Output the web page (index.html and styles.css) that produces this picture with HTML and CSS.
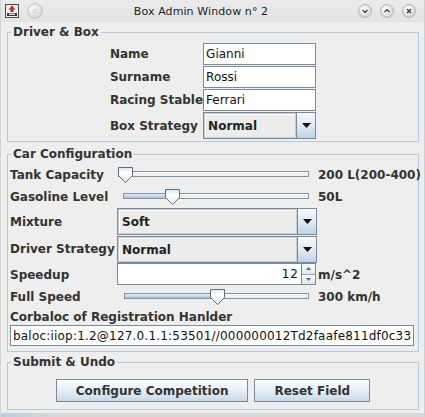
FILE: index.html
```html
<!DOCTYPE html>
<html lang="en">
<head>
<meta charset="utf-8">
<title>Box Admin Window n° 2</title>
<link rel="stylesheet" href="styles.css">
</head>
<body>
<div class="window">
  <header class="titlebar">
    <div class="tb-left">
      <svg class="app-icon" width="16" height="16" viewBox="0 0 16 16">
        <rect x="1.5" y="1.5" width="13" height="13" fill="#f2f2f2" stroke="#4a4a4a"/>
        <path d="M8 2.5 L11.5 6.5 L9.5 6.5 L9.5 9 L6.5 9 L6.5 6.5 L4.5 6.5 Z" fill="#c4262c"/>
        <rect x="3" y="10" width="10" height="3" fill="#3a3a3a"/>
        <rect x="5" y="10.5" width="6" height="1.5" fill="#d8d8d8"/>
      </svg>
      <svg class="tb-btn" width="16" height="16" viewBox="0 0 16 16">
        <defs><radialGradient id="gl" cx="0.4" cy="0.35" r="0.7"><stop offset="0" stop-color="#ffffff"/><stop offset="1" stop-color="#d2d2d2"/></radialGradient></defs>
        <circle cx="8" cy="8" r="7.3" fill="url(#gl)" stroke="#bcbcbc" stroke-width="0.9"/>
        <circle cx="8" cy="8" r="2" fill="#e4e4e4" stroke="#c4c4c4" stroke-width="0.6"/>
      </svg>
    </div>
    <div class="tb-title">Box Admin Window n° 2</div>
    <div class="tb-right">
      <svg class="tb-btn" width="14" height="14" viewBox="0 0 14 14">
        <defs><radialGradient id="g1" cx="0.4" cy="0.35" r="0.7"><stop offset="0" stop-color="#ffffff"/><stop offset="1" stop-color="#d4d4d4"/></radialGradient></defs>
        <circle cx="7" cy="7" r="6.4" fill="url(#g1)" stroke="#a9a9a9" stroke-width="0.9"/>
        <path d="M4.6 6 L7 8.4 L9.4 6" fill="none" stroke="#3a3a3a" stroke-width="1.3"/>
      </svg>
      <svg class="tb-btn" width="14" height="14" viewBox="0 0 14 14">
        <defs><radialGradient id="g2" cx="0.4" cy="0.35" r="0.7"><stop offset="0" stop-color="#ffffff"/><stop offset="1" stop-color="#d4d4d4"/></radialGradient></defs>
        <circle cx="7" cy="7" r="6.4" fill="url(#g2)" stroke="#a9a9a9" stroke-width="0.9"/>
        <path d="M4.6 8 L7 5.6 L9.4 8" fill="none" stroke="#3a3a3a" stroke-width="1.3"/>
      </svg>
      <svg class="tb-btn" width="14" height="14" viewBox="0 0 14 14">
        <defs><radialGradient id="g3" cx="0.4" cy="0.35" r="0.7"><stop offset="0" stop-color="#ffffff"/><stop offset="1" stop-color="#d4d4d4"/></radialGradient></defs>
        <circle cx="7" cy="7" r="6.4" fill="url(#g3)" stroke="#a9a9a9" stroke-width="0.9"/>
        <path d="M5 5 L9 9 M9 5 L5 9" fill="none" stroke="#3a3a3a" stroke-width="1.3"/>
      </svg>
    </div>
  </header>

  <main class="content">
    <fieldset class="group group-driver">
      <legend>Driver &amp; Box</legend>
      <div class="form-driver">
        <span class="lbl">Name</span>
        <div class="field">Gianni</div>
        <span class="lbl">Surname</span>
        <div class="field">Rossi</div>
        <span class="lbl">Racing Stable</span>
        <div class="field">Ferrari</div>
        <span class="lbl">Box Strategy</span>
        <div class="combo">
          <span class="combo-value">Normal</span>
          <span class="combo-arrow"><svg width="9" height="5" viewBox="0 0 9 5"><path d="M0 0 H9 L4.5 5 Z" fill="#111"/></svg></span>
        </div>
      </div>
    </fieldset>

    <fieldset class="group group-car">
      <legend>Car Configuration</legend>
      <div class="form-car">
        <span class="lbl">Tank Capacity</span>
        <div class="slider slider-tank">
          <div class="track"><div class="track-fill" style="width:0px"></div></div>
          <svg class="thumb" style="left:1px" width="15" height="16" viewBox="0 0 15 16">
            <defs><linearGradient id="t1" x1="0" y1="0" x2="0" y2="1"><stop offset="0" stop-color="#dbe6f1"/><stop offset="0.35" stop-color="#ffffff"/><stop offset="1" stop-color="#e6edf4"/></linearGradient></defs>
            <path d="M0.5 0.5 H14.5 V8.5 L7.5 15.5 L0.5 8.5 Z" fill="url(#t1)" stroke="#5f6b78"/>
          </svg>
        </div>
        <span class="val">200 L(200-400)</span>

        <span class="lbl">Gasoline Level</span>
        <div class="slider slider-gas">
          <div class="track"><div class="track-fill" style="width:48px"></div></div>
          <svg class="thumb" style="left:48px" width="15" height="16" viewBox="0 0 15 16">
            <defs><linearGradient id="t2" x1="0" y1="0" x2="0" y2="1"><stop offset="0" stop-color="#dbe6f1"/><stop offset="0.35" stop-color="#ffffff"/><stop offset="1" stop-color="#e6edf4"/></linearGradient></defs>
            <path d="M0.5 0.5 H14.5 V8.5 L7.5 15.5 L0.5 8.5 Z" fill="url(#t2)" stroke="#5f6b78"/>
          </svg>
        </div>
        <span class="val">50L</span>

        <span class="lbl">Mixture</span>
        <div class="combo">
          <span class="combo-value">Soft</span>
          <span class="combo-arrow"><svg width="9" height="5" viewBox="0 0 9 5"><path d="M0 0 H9 L4.5 5 Z" fill="#111"/></svg></span>
        </div>
        <span></span>

        <span class="lbl">Driver Strategy</span>
        <div class="combo combo-low">
          <span class="combo-value">Normal</span>
          <span class="combo-arrow"><svg width="9" height="5" viewBox="0 0 9 5"><path d="M0 0 H9 L4.5 5 Z" fill="#111"/></svg></span>
        </div>
        <span></span>

        <span class="lbl">Speedup</span>
        <div class="spinner">
          <span class="spin-text">12</span>
          <span class="spin-btns">
            <span class="spin-btn"><svg width="5" height="3" viewBox="0 0 5 3"><path d="M0 3 H5 L2.5 0 Z" fill="#666"/></svg></span>
            <span class="spin-btn"><svg width="5" height="3" viewBox="0 0 5 3"><path d="M0 0 H5 L2.5 3 Z" fill="#666"/></svg></span>
          </span>
        </div>
        <span class="val">m/s^2</span>

        <span class="lbl">Full Speed</span>
        <div class="slider slider-full">
          <div class="track"><div class="track-fill" style="width:92px"></div></div>
          <svg class="thumb" style="left:93px" width="15" height="16" viewBox="0 0 15 16">
            <defs><linearGradient id="t3" x1="0" y1="0" x2="0" y2="1"><stop offset="0" stop-color="#dbe6f1"/><stop offset="0.35" stop-color="#ffffff"/><stop offset="1" stop-color="#e6edf4"/></linearGradient></defs>
            <path d="M0.5 0.5 H14.5 V8.5 L7.5 15.5 L0.5 8.5 Z" fill="url(#t3)" stroke="#5f6b78"/>
          </svg>
        </div>
        <span class="val">300 km/h</span>

        <span class="lbl lbl-wide">Corbaloc of Registration Hanlder</span>
        <div class="field field-wide">baloc:iiop:1.2@127.0.1.1:53501//000000012Td2faafe811df0c33</div>
      </div>
    </fieldset>

    <fieldset class="group group-submit">
      <legend>Submit &amp; Undo</legend>
      <div class="actions">
        <button class="btn" type="button">Configure Competition</button>
        <button class="btn" type="button">Reset Field</button>
      </div>
    </fieldset>
  </main>
  <div class="frame-bottom"></div>
</div>
</body>
</html>
```

FILE: styles.css
```css
* { box-sizing: border-box; }

html, body {
  margin: 0;
  padding: 0;
}

body {
  width: 425px;
  height: 417px;
  overflow: hidden;
  font-family: "DejaVu Sans", "Liberation Sans", sans-serif;
  font-size: 12px;
  color: #333333;
  background: #eeeeee;
}

.window {
  width: 425px;
  height: 417px;
  display: flex;
  flex-direction: column;
  background: #eeeeee;
  border-left: 1px solid #d6d6d6;
  border-right: 1px solid #cfcfcf;
}

/* ---------- title bar ---------- */
.titlebar {
  height: 22px;
  flex: none;
  display: flex;
  align-items: center;
  background: linear-gradient(#ebebeb, #e3e3e3);
}

.tb-left {
  display: flex;
  align-items: center;
  gap: 7px;
  padding-left: 3px;
  width: 43px;
}

.tb-title {
  flex: 1;
  text-align: center;
  color: #1c1c1c;
  font-size: 11px;
  letter-spacing: 0.1px;
}

.tb-right {
  display: flex;
  align-items: center;
  gap: 8px;
  padding-right: 8px;
}

.tb-btn, .app-icon { display: block; }

/* ---------- content ---------- */
.content {
  display: flex;
  flex-direction: column;
  padding: 3px 5px 0 6px;
}

.group {
  margin: 0;
  padding: 0;
  border: 1px solid #b9c8d8;
  min-width: 0;
}

.group legend {
  margin-left: 3px;
  padding: 0 2px;
  font-weight: bold;
  font-size: 12px;
  line-height: 14px;
  color: #333333;
}

.group-car { margin-top: 5px; }
.group-submit { margin-top: 3px; }

.lbl {
  font-weight: bold;
  color: #333333;
  white-space: nowrap;
  align-self: center;
}

.val {
  font-weight: bold;
  color: #333333;
  white-space: nowrap;
  align-self: center;
  padding-left: 1px;
}

/* driver & box form */
.form-driver {
  display: grid;
  grid-template-columns: auto 113px;
  grid-template-rows: 22px 22px 22px 27px;
  row-gap: 1px;
  justify-content: center;
  padding: 4px 0 2px 0;
}

.field {
  height: 22px;
  border: 1px solid #7a8a99;
  background: #ffffff;
  color: #111111;
  padding-left: 2px;
  display: flex;
  align-items: center;
  white-space: nowrap;
  overflow: hidden;
}

.combo {
  display: flex;
  height: 27px;
  border: 1px solid #7a8a99;
}

.combo-value {
  flex: 1;
  display: flex;
  align-items: center;
  padding-left: 3px;
  font-weight: bold;
  color: #222222;
  background: #ececec;
  border: 1px solid #c8ced6;
  box-shadow: inset 1px 1px 0 #ffffff;
}

.combo-arrow {
  width: 19px;
  display: flex;
  align-items: center;
  justify-content: center;
  border-left: 1px solid #7a8a99;
  background: linear-gradient(#f6f9fc, #dde8f3 55%, #bfd2e5);
}

.combo-arrow svg { display: block; }

/* car configuration form */
.form-car {
  display: grid;
  grid-template-columns: 107px 200px 1fr;
  grid-template-rows: 22px 22px 27px 28px 23px 21px 17px 22px;
  padding: 3px 4px 5px 2px;
}

.combo-low { align-self: end; height: 27px; }

.slider {
  position: relative;
  height: 16px;
  align-self: center;
  padding-right: 8px;
}

.slider-tank { padding-left: 1px; }
.slider-gas { padding-left: 6px; }
.slider-full { padding-left: 7px; }

.track {
  height: 6px;
  margin-top: 4px;
  border: 1px solid #8594a3;
  background: #f0f0f0;
  box-shadow: inset 0 1px 0 #ffffff;
}

.track-fill {
  height: 100%;
  background: linear-gradient(#e6eef6, #a9c0d8);
}

.thumb {
  position: absolute;
  top: 0;
  display: block;
}

.spinner {
  display: flex;
  height: 22px;
  width: 199px;
  align-self: start;
  border: 1px solid #7a8a99;
  background: #ffffff;
}

.spin-text {
  flex: 1;
  text-align: right;
  padding-right: 2px;
  align-self: center;
  color: #111111;
  letter-spacing: 1px;
}

.spin-btns {
  width: 14px;
  display: flex;
  flex-direction: column;
  border-left: 1px solid #7a8a99;
}

.spin-btn {
  flex: 1;
  display: flex;
  align-items: center;
  justify-content: center;
  background: linear-gradient(#fbfcfd, #dfe7ef);
}

.spin-btn + .spin-btn { border-top: 1px solid #9aa6b2; }

.lbl-wide {
  grid-column: 1 / -1;
  align-self: end;
  line-height: 14px;
}

.field-wide {
  grid-column: 1 / -1;
  height: 21px;
  margin-top: 1px;
  width: 404px;
  letter-spacing: 0.2px;
}

/* submit & undo */
.actions {
  display: flex;
  justify-content: center;
  gap: 6px;
  padding: 10px 0 7px 0;
}

.btn {
  height: 23px;
  margin: 0;
  padding: 0 19px;
  border: 1px solid #7a8a99;
  border-radius: 0;
  background: linear-gradient(#fdfeff, #e6eef6 50%, #c9d9e9);
  font-family: "DejaVu Sans", "Liberation Sans", sans-serif;
  font-size: 12px;
  font-weight: bold;
  color: #333333;
}

.frame-bottom {
  flex: 1;
  margin-top: 3px;
  background: linear-gradient(90deg, #b9cde0, #d8d8d8 12%, #d8d8d8);
}
```
